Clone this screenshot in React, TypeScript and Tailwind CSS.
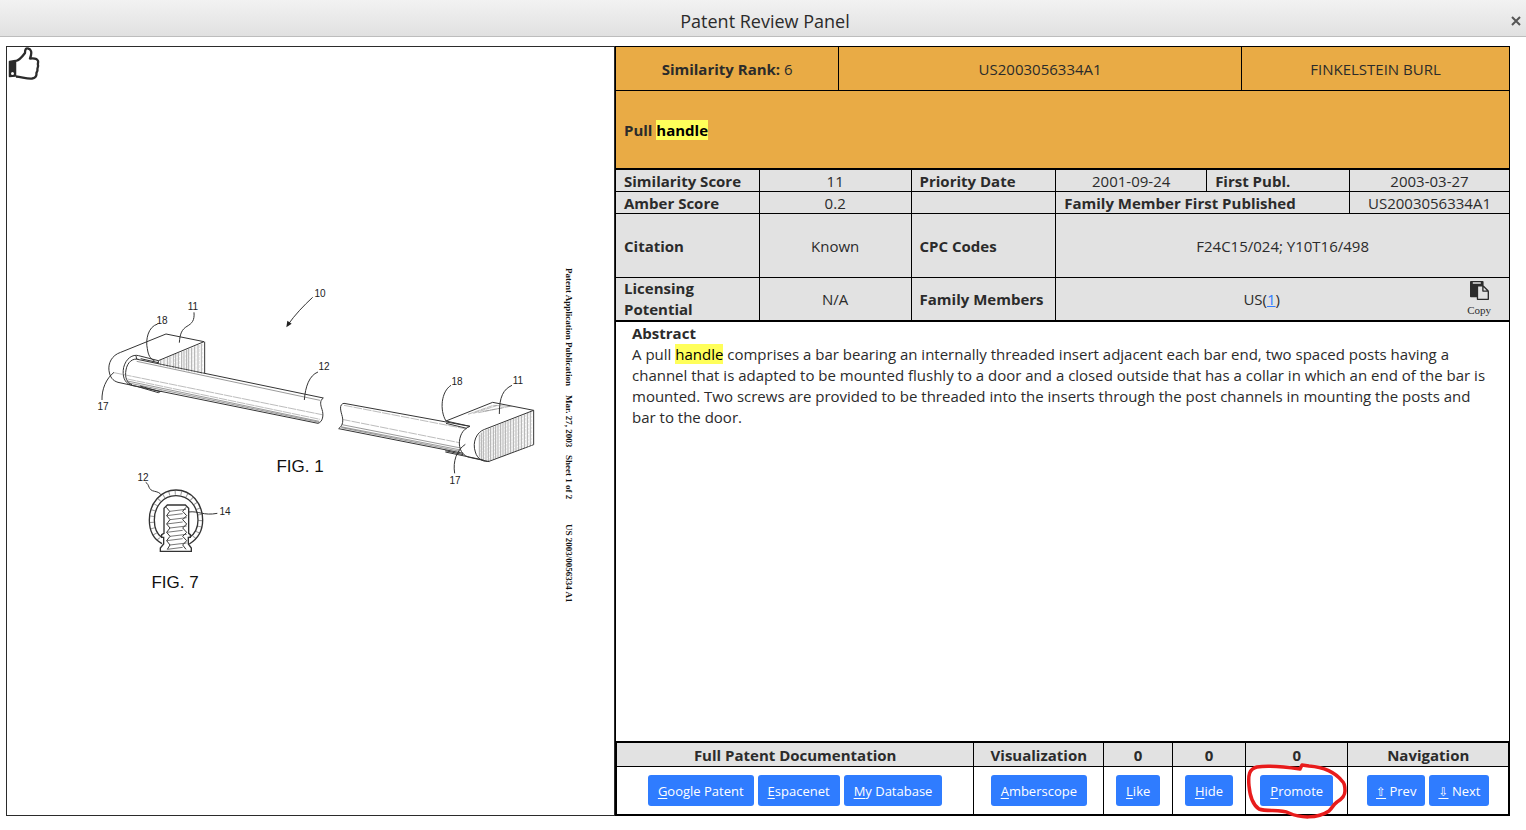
import React, { type ReactNode } from "react";

const LABEL = "px-2 text-left font-bold";

const HATCH_LEFT = [
  [212, 240, 256], [222, 236, 258], [232, 232, 260], [240, 229, 262], [250, 225, 264],
  [257, 222, 266], [265, 219, 267], [275, 215, 269], [282, 212, 271], [290, 209, 272],
  [296, 206, 274], [305, 203, 275], [314, 199, 277], [324, 195, 279], [334, 191, 281],
];

const HATCH_RIGHT = [
  [508, 224, 292], [514, 218, 298], [520, 213, 301], [528, 209, 303], [535, 206, 303],
  [542, 203, 302], [550, 200, 299], [557, 197, 297], [564, 195, 294], [572, 192, 291],
  [579, 189, 289], [586, 186, 286], [594, 183, 283], [602, 180, 280], [610, 176, 277],
  [618, 173, 274], [626, 170, 271], [634, 167, 268], [643, 163, 265], [652, 159, 261], [661, 156, 258],
];

function Mark({ children }: { children: ReactNode }) {
  return <mark className="bg-[#ffff5a] text-black">{children}</mark>;
}

function ThumbIcon() {
  return (
    <svg viewBox="0 0 32 36" className="h-9 w-8" fill="none" stroke="#2b2b2b" strokeWidth="2.300" strokeLinejoin="round" aria-hidden="true">
      <path d="M8 14 C12 13 14 10 17 6 C17 2 18 1 20 1.500 C23 2 24.500 5 22 11.500 C26 11 29 11 30 14 C30.500 15 29.500 17 30 18 C30.500 20 29 21 29.500 23 C29.500 25 28 25 28.500 27 C28.500 30 27 31 24 31.500 C19 32 14 30 8 29.500" />
      <path d="M1.500 14.500 L7.500 13.500 V29 L1.500 29.500 Z" fill="#2b2b2b" strokeWidth="1.500" />
      <circle cx="4.500" cy="26.500" r="1.500" fill="white" stroke="none" />
    </svg>
  );
}

function CopyIcon() {
  return (
    <svg viewBox="0 0 1792 1792" className="size-[19px]" fill="#2b2b2b" aria-hidden="true">
      <path d="M768 1664h896v-640h-416q-40 0-68-28t-28-68v-416h-384v1152zm256-1440v-64q0-13-9.500-22.500t-22.500-9.500h-704q-13 0-22.500 9.500t-9.500 22.500v64q0 13 9.500 22.500t22.500 9.500h704q13 0 22.500-9.500t9.500-22.500zm256 672h299l-299-299v299zm512 128v672q0 40-28 68t-68 28h-960q-40 0-68-28t-28-68v-160h-544q-40 0-68-28t-28-68v-1344q0-40 28-68t68-28h1088q40 0 68 28t28 68v328q21 13 36 28l408 408q28 28 48 76t20 88z" />
    </svg>
  );
}

function PatentDrawing() {
  return (
    <svg viewBox="7 47 607 768" className="h-full w-full" fill="none" stroke="#333" strokeWidth="3" role="img" aria-label="Patent drawing sheet">
      <g transform="translate(90 280) scale(.33333)">
        <path d="M92 217 L228 162 L342 185 M344 185 V280 M92 217 C65 226 54 250 57 272 C60 292 68 302 84 307 L140 319" />
        <path d="M342 185 L205 242 L146 227 C128 222 108 235 101 262 C96 288 103 308 122 315" />
        <path d="M205 242 V250" />
        <path d="M146 238 C128 234 112 246 108 270 C104 292 110 308 126 314 M138 227 L140 238 M152 236 L205 248" />
        <path d="M142 238 L700 354 M124 316 L684 430" />
        <path d="M140 244 L690 361 M112 303 L688 424 M116 309 L688 427" strokeWidth="1.500" />
        <path d="M72 278 L696 404 M112 297 L690 418" strokeWidth="1.500" stroke="#777" strokeDasharray="26 2" />
        <path d="M700 354 C688 362 692 376 696 388 C702 406 698 426 684 430" />
        <path d="M140 319 L205 338 L214 333 M150 318 L210 335" />
        <g strokeWidth="1.500" stroke="#555">
          {HATCH_LEFT.map(([x, top, bottom]) => (
            <path key={x} d={`M${x} ${top} V${bottom}`} />
          ))}
          {HATCH_LEFT.map(([x, top, bottom]) => (
            <path key={x} d={`M${x + 4} ${top} V${bottom}`} strokeDasharray="9 3" stroke="#ccc" />
          ))}
        </g>
        <path d="M312 97 C314 122 306 130 291 139 C276 148 270 160 268 188 M203 132 C174 140 166 180 172 206 C175 226 180 236 194 243" />
        <path d="M36 360 C35 328 48 296 72 277 M684 276 C658 286 646 320 643 360 M668 52 C642 76 615 104 594 134" />
        <path d="M589 142 L592 122 L605 131 Z" fill="#222" stroke="none" />
      </g>
      <g transform="translate(310 360) scale(.33333)">
        <path d="M480 199 L102 130 C86 133 92 152 97 170 C101 190 95 198 86 206 L460 280" />
        <path d="M408 183 L548 127 L671 151 V254 L540 303 C522 308 502 298 496 276 C486 246 500 216 524 208 L671 151" />
        <path d="M408 183 L480 199 M408 190 L470 205 M480 199 C456 208 448 230 448 252 C450 276 462 288 478 292 L538 305 M406 272 L460 284 M406 276 L520 300" />
        <path d="M92 200 L452 270 M94 203 L450 274 M96 194 L452 264" strokeWidth="1.500" />
        <path d="M96 178 L448 248 M102 136 L470 207" strokeWidth="1.500" stroke="#777" strokeDasharray="26 3" />
        <path d="M474 163 L550 136 L610 140 M490 160 L560 137 M505 158 L600 139 M520 154 L580 143" strokeWidth="1.500" stroke="#777" strokeDasharray="18 2" />
        <g strokeWidth="1.500" stroke="#555">
          {HATCH_RIGHT.map(([x, top, bottom]) => (
            <path key={x} d={`M${x} ${top} V${bottom}`} />
          ))}
          {HATCH_RIGHT.map(([x, top, bottom]) => (
            <path key={x} d={`M${x + 4} ${top} V${bottom}`} strokeDasharray="8 3" stroke="#ccc" />
          ))}
        </g>
        <path d="M423 76 C394 94 388 150 408 183 M606 76 C580 88 568 110 568 162 M434 340 C428 304 440 270 466 253" />
      </g>
      <g transform="translate(120 460) scale(.33333)">
        <path d="M116 238 C102 220 96 202 96 180 C96 134 127 98 168 98 C209 98 241 134 241 180 C241 204 232 224 218 238" stroke="#999" strokeWidth="12" strokeDasharray="3 15" />
        <path d="M126 251 C102 238 88 212 88 180 C88 128 124 90 168 90 C214 90 248 130 248 180 C248 212 234 236 208 252" strokeWidth="4" />
        <path d="M126 233 C110 222 103 203 103 180 C103 138 130 107 168 107 C206 107 234 138 234 180 C234 204 224 222 208 233" strokeWidth="4" />
        <path d="M132 220 V145 L142 135 H196 L206 145 V220 L211 224 V232 H205 V252 L214 264 V274 H121 V264 L131 252 V232 H125 V224 Z" fill="white" strokeWidth="4" />
        <path d="M139 142 L149 154 L140 167 L150 179 L140 192 L150 204 L140 217 L150 229 L140 242 L150 255 L142 268 M198 142 L188 154 L200 167 L188 179 L200 192 L188 204 L200 217 L188 229 L200 242 L188 255 L198 268" />
        <path d="M149 154 L198 148 M140 167 L188 161 M150 179 L200 173 M140 192 L188 186 M150 204 L200 198 M140 217 L188 211 M150 229 L200 223 M140 242 L188 236 M150 255 L200 249 M142 268 L188 262" strokeWidth="2" />
        <path d="M77 67 C90 74 82 90 104 94 C114 96 120 99 124 105 M206 156 C235 152 250 168 292 160" />
      </g>
      <g fill="#222" stroke="none" className="font-['Liberation_Sans']">
        <g fontSize="10" textAnchor="middle">
          <text x="320" y="297">10</text>
          <text x="193" y="310">11</text>
          <text x="162" y="324">18</text>
          <text x="324" y="370">12</text>
          <text x="103" y="410">17</text>
          <text x="457" y="385">18</text>
          <text x="518" y="384">11</text>
          <text x="455" y="484">17</text>
          <text x="143" y="481">12</text>
          <text x="225" y="515">14</text>
        </g>
        <g fontSize="17" textAnchor="middle" fill="#111">
          <text x="300" y="472">FIG. 1</text>
          <text x="175" y="588">FIG. 7</text>
        </g>
      </g>
      <g fill="#111" stroke="none" fontSize="9" fontWeight="bold" className="font-['Liberation_Serif']">
        <text transform="translate(566 268) rotate(90)">Patent Application Publication</text>
        <text transform="translate(566 395) rotate(90)">Mar. 27, 2003</text>
        <text transform="translate(566 455) rotate(90)">Sheet 1 of 2</text>
        <text transform="translate(566 524) rotate(90)">US 2003/0056334 A1</text>
      </g>
    </svg>
  );
}

function ActionButton({ accessKey, rest }: { accessKey: string; rest: string }) {
  return (
    <button type="button" className="h-[31px] rounded-[3px] bg-[#2f7cff] px-[10px] pt-px text-[13px] whitespace-nowrap text-white">
      <span className="underline underline-offset-2">{accessKey}</span>
      {rest}
    </button>
  );
}

function NavButton({ arrow, label }: { arrow: string; label: string }) {
  return (
    <button type="button" className="h-[31px] rounded-[3px] bg-[#2f7cff] px-[9px] pt-px text-[13px] whitespace-nowrap text-white">
      <span className="text-xs underline underline-offset-2">{arrow}</span> {label}
    </button>
  );
}

function ActionCell({ children, last = false }: { children: ReactNode; last?: boolean }) {
  return (
    <td className={last ? "h-[47px] p-0" : "relative h-[47px] border-r border-black p-0"}>
      <div className="flex justify-center gap-1">{children}</div>
    </td>
  );
}

function HeaderTable() {
  return (
    <table className="w-full table-fixed border-separate border-spacing-0 bg-[#e9ab45]">
      <colgroup>
        <col className="w-[25%]" />
        <col className="w-[45.1%]" />
        <col />
      </colgroup>
      <tbody>
        <tr className="h-11 text-center">
          <td className="border-r border-b border-black pt-0.5"><b>Similarity Rank:</b> 6</td>
          <td className="border-r border-b border-black pt-0.5">US2003056334A1</td>
          <td className="border-b border-black pt-0.5">FINKELSTEIN BURL</td>
        </tr>
        <tr className="h-[79px]">
          <td colSpan={3} className="border-b-2 border-black px-2 pt-0.5 font-bold">Pull <Mark>handle</Mark></td>
        </tr>
      </tbody>
    </table>
  );
}

function DetailsTable() {
  const cell = "border-r border-b border-black pt-0.5 pb-0";
  const end = "border-b border-black pt-0.5 pb-0";
  return (
    <table className="w-full table-fixed border-separate border-spacing-0 bg-[#e2e2e2] text-center">
      <colgroup>
        <col className="w-[16.1%]" />
        <col className="w-[17%]" />
        <col className="w-[16.2%]" />
        <col className="w-[16.9%]" />
        <col className="w-[16%]" />
        <col />
      </colgroup>
      <tbody>
        <tr className="h-[22px] leading-[19px]">
          <th className={`${cell} ${LABEL}`}>Similarity Score</th>
          <td className={cell}>11</td>
          <th className={`${cell} ${LABEL}`}>Priority Date</th>
          <td className={cell}>2001-09-24</td>
          <th className={`${cell} ${LABEL}`}>First Publ.</th>
          <td className={end}>2003-03-27</td>
        </tr>
        <tr className="h-[22px] leading-[19px]">
          <th className={`${cell} ${LABEL}`}>Amber Score</th>
          <td className={cell}>0.2</td>
          <td className={cell} />
          <th colSpan={2} className={`${cell} ${LABEL}`}>Family Member First Published</th>
          <td className={end}>US2003056334A1</td>
        </tr>
        <tr className="h-16">
          <th className={`${cell} ${LABEL}`}>Citation</th>
          <td className={cell}>Known</td>
          <th className={`${cell} ${LABEL}`}>CPC Codes</th>
          <td colSpan={3} className={end}>F24C15/024; Y10T16/498</td>
        </tr>
        <tr className="h-11">
          <th className="border-r border-b-2 border-black px-2 py-0 text-left font-bold">Licensing Potential</th>
          <td className="border-r border-b-2 border-black p-0">N/A</td>
          <th className="border-r border-b-2 border-black px-2 py-0 text-left font-bold whitespace-nowrap">Family Members</th>
          <td colSpan={3} className="border-b-2 border-black p-0">
            <div className="flex items-center pr-[18px]">
              <span className="flex-1">
                US(<a href="#family" className="text-[#2f7cff] underline">1</a>)
              </span>
              <button type="button" className="flex flex-col items-center gap-0.5 font-['Liberation_Serif'] text-[11px] leading-4">
                <CopyIcon />
                Copy
              </button>
            </div>
          </td>
        </tr>
      </tbody>
    </table>
  );
}

function ActionsTable() {
  const head = "border-r border-b border-black pt-0.5 pb-0";
  return (
    <div className="-mr-px border-2 border-l border-black">
      <table className="w-full table-fixed border-separate border-spacing-0 text-center">
        <colgroup>
          <col className="w-[40.1%]" />
          <col className="w-[14.6%]" />
          <col className="w-[7.7%]" />
          <col className="w-[8.2%]" />
          <col className="w-[11.5%]" />
          <col />
        </colgroup>
        <thead className="bg-[#e2e2e2]">
          <tr className="h-6">
            <th className={head}>Full Patent Documentation</th>
            <th className={head}>Visualization</th>
            <th className={head}>0</th>
            <th className={head}>0</th>
            <th className={head}>0</th>
            <th className="border-b border-black pt-0.5 pb-0">Navigation</th>
          </tr>
        </thead>
        <tbody>
          <tr>
            <ActionCell>
              <ActionButton accessKey="G" rest="oogle Patent" />
              <ActionButton accessKey="E" rest="spacenet" />
              <ActionButton accessKey="M" rest="y Database" />
            </ActionCell>
            <ActionCell><ActionButton accessKey="A" rest="mberscope" /></ActionCell>
            <ActionCell><ActionButton accessKey="L" rest="ike" /></ActionCell>
            <ActionCell><ActionButton accessKey="H" rest="ide" /></ActionCell>
            <ActionCell>
              <ActionButton accessKey="P" rest="romote" />
              <svg viewBox="1243 761 108 60" className="pointer-events-none absolute top-1/2 left-1/2 h-[60px] w-[108px] -translate-1/2" fill="none" stroke="#e81c1c" strokeWidth="3.500" strokeLinecap="round" strokeLinejoin="round" aria-hidden="true">
                <path d="M1300 769 C1286 767 1269 765 1257 767 C1249 769 1248 775 1249 786 C1250 797 1253 805 1259 809 C1267 812 1280 809 1289 813 C1300 818 1317 819 1329 811 C1333 807 1333 805 1337 802 C1342 799 1345 796 1345 791 C1345 787 1345 783 1342 781 C1335 772 1322 767 1309 766 L1302 765 L1300 769" />
              </svg>
            </ActionCell>
            <ActionCell last>
              <NavButton arrow="⇧" label="Prev" />
              <NavButton arrow="⇩" label="Next" />
            </ActionCell>
          </tr>
        </tbody>
      </table>
    </div>
  );
}

export default function App() {
  return (
    <div className="flex min-h-screen flex-col bg-white font-['Open_Sans','DejaVu_Sans',sans-serif] text-[15px] leading-[21px] text-[#2b2b2b]">
      <header className="flex h-[37px] items-center border-b border-[#bdbdbd] bg-linear-to-b from-[#f2f2f2] to-[#e1e1e1] pt-1.5">
        <h1 className="flex-1 pl-6 text-center text-lg">Patent Review Panel</h1>
        <button type="button" aria-label="Close" className="flex size-5 items-center justify-center">
          <svg viewBox="0 0 10 10" className="size-[10px]" stroke="#555" strokeWidth="2" aria-hidden="true">
            <path d="M1 1 L9 9 M9 1 L1 9" />
          </svg>
        </button>
      </header>
      <main className="grid flex-1 grid-cols-[609fr_895fr] pt-[9px] pr-4 pb-[14px] pl-[6px]">
        <section className="relative border border-[#2b2b2b]">
          <PatentDrawing />
          <div className="absolute top-0 left-px">
            <ThumbIcon />
          </div>
        </section>
        <section className="flex flex-col border-x border-t border-black">
          <HeaderTable />
          <DetailsTable />
          <article className="flex-1 px-4 pt-px">
            <h2 className="font-bold">Abstract</h2>
            <p>
              A pull <Mark>handle</Mark> comprises a bar bearing an internally threaded insert adjacent each bar end, two spaced posts
              having a channel that is adapted to be mounted flushly to a door and a closed outside that has a collar in which an end
              of the bar is mounted. Two screws are provided to be threaded into the inserts through the post channels in mounting the
              posts and bar to the door.
            </p>
          </article>
          <ActionsTable />
        </section>
      </main>
    </div>
  );
}
